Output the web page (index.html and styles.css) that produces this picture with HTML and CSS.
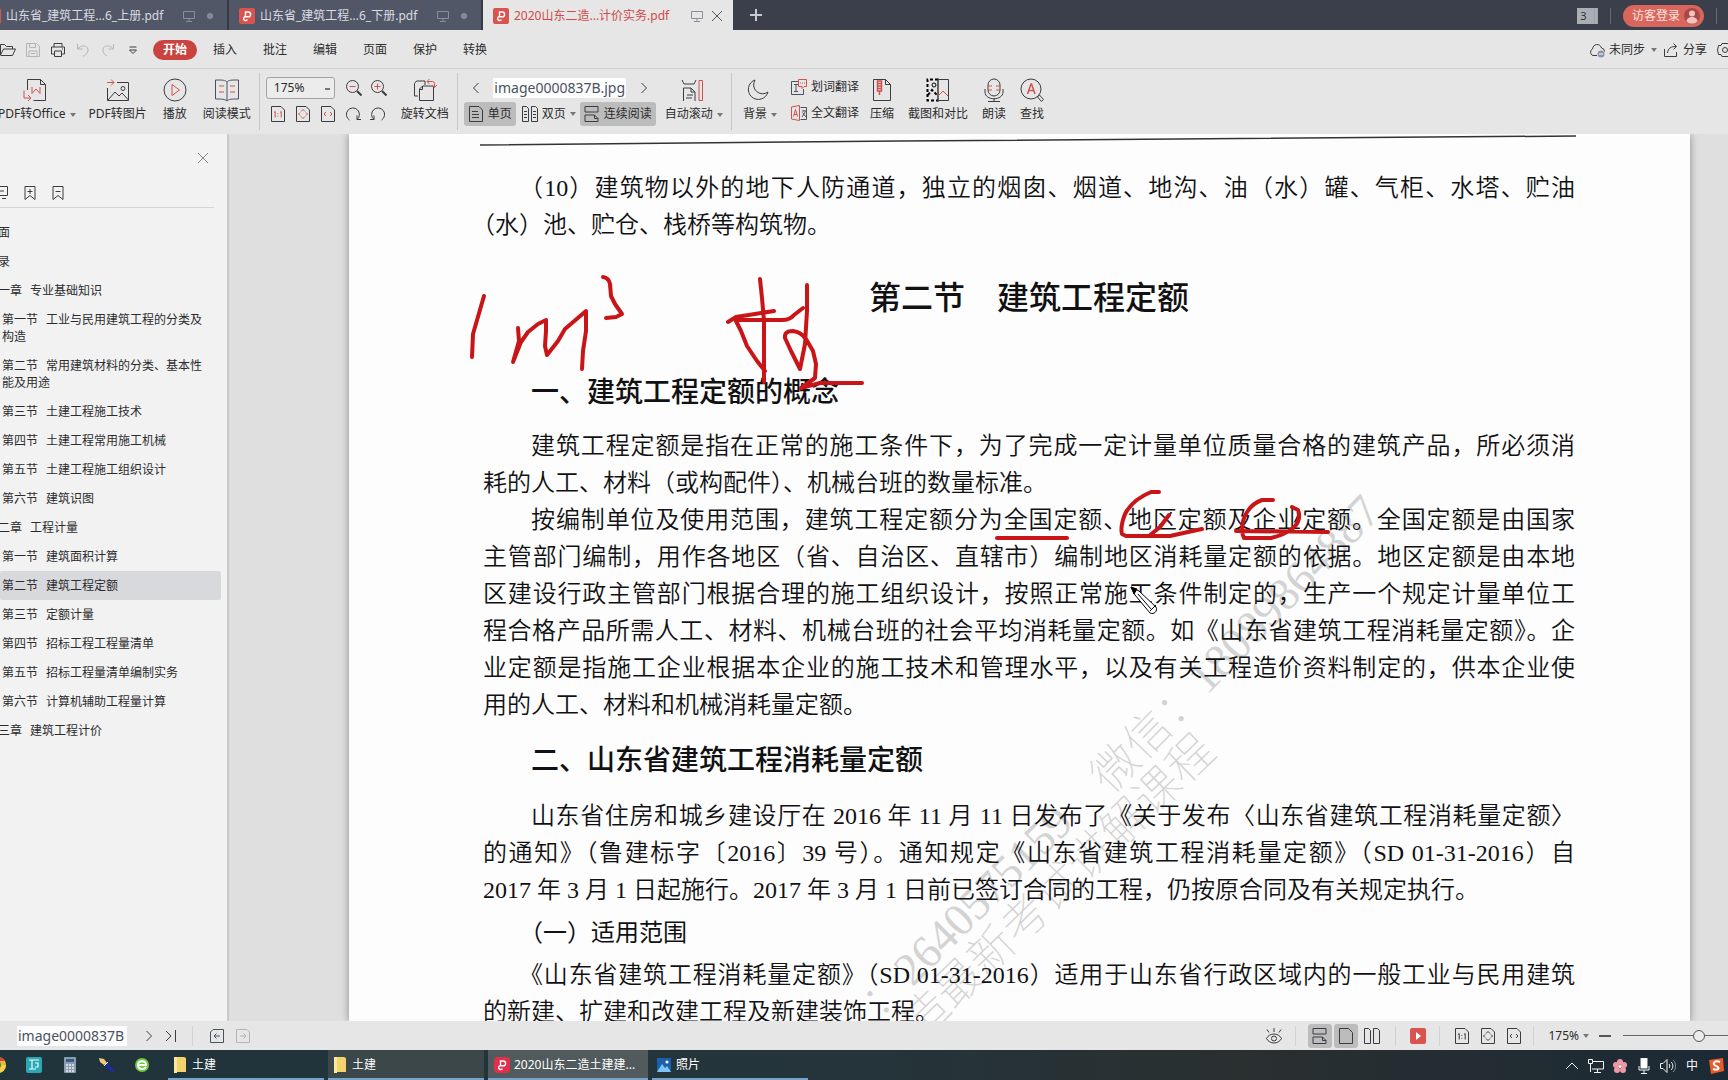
FILE: index.html
```html
<!DOCTYPE html>
<html lang="zh-CN">
<head>
<meta charset="utf-8">
<title>2020山东二造土建计价实务.pdf</title>
<link rel="stylesheet" href="styles.css">
</head>
<body>
<svg class="defs" aria-hidden="true">
  <symbol id="i-pdf" viewBox="0 0 16 16"><rect width="16" height="16" rx="2" fill="#d9534f"/><path d="M6.500 8.500V4h2.700a2.400 2.400 0 0 1 0 4.800H6.500a1.900 1.900 0 1 0 1.800 2.600" fill="none" stroke="#fff" stroke-width="1.400"/></symbol>
  <symbol id="i-monitor" viewBox="0 0 12 12"><path d="M.5 1.500h11v7H.5zM6 8.500v3M3 11.500h6"/></symbol>
  <symbol id="i-x" viewBox="0 0 12 12"><path d="M1 1l10 10M11 1L1 11"/></symbol>
  <symbol id="i-left" viewBox="0 0 8 12"><path d="M6.500 1l-5 5 5 5"/></symbol>
  <symbol id="i-right" viewBox="0 0 8 12"><path d="M1.500 1l5 5-5 5"/></symbol>
  <symbol id="i-oneone" viewBox="0 0 14 16"><path d="M.5.5h9.500l3.500 3.500v11.500H.5z"/><path class="hot" d="M3 6.500l1.200-1v6M9 6.500l1.200-1v6M6.800 7v.8M6.800 9.800v.8"/></symbol>
  <symbol id="i-fitpage" viewBox="0 0 14 16"><path d="M.5.5h9.500l3.500 3.500v11.500H.5z"/><path class="hot" d="M5 5.500l2-2 2 2M5 10.500l2 2 2-2M4 6.500L2.500 8 4 9.500M10 6.500L11.500 8 10 9.500"/></symbol>
  <symbol id="i-fitwidth" viewBox="0 0 14 16"><path d="M.5.5h9.500l3.500 3.500v11.500H.5z"/><path class="hot" d="M5 6L3 8l2 2M9 6l2 2-2 2"/></symbol>
  <symbol id="i-rows" viewBox="0 0 15 16"><path d="M.5.500h13v5.500H.5zM.5 15.500V9h9.500l3.500 3.500v3zM10 9v3.500h3.500"/></symbol>
  <symbol id="i-double" viewBox="0 0 16 16"><path d="M.5.5h4l2 2v13h-6zM9.500.5h4l2 2v13h-6z"/></symbol>
  <symbol id="i-folder" viewBox="0 0 14 16"><path d="M1 0h10l2 1v14H1z" fill="#f5d36c"/><path d="M1 0h3v16H1z" fill="#ffe9a0"/></symbol>
</svg>

<header class="tabs">
  <div class="tab tab-first"><svg class="s16"><use href="#i-pdf"/></svg><span class="tab-name">山东省_建筑工程...6_上册.pdf</span><svg class="s12 line"><use href="#i-monitor"/></svg><i class="dot"></i></div>
  <div class="tab"><svg class="s16"><use href="#i-pdf"/></svg><span class="tab-name">山东省_建筑工程...6_下册.pdf</span><svg class="s12 line"><use href="#i-monitor"/></svg><i class="dot"></i></div>
  <div class="tab tab-active"><svg class="s16"><use href="#i-pdf"/></svg><span class="tab-name">2020山东二造...计价实务.pdf</span><svg class="s12 line"><use href="#i-monitor"/></svg><button class="tab-x" aria-label="关闭标签"><svg class="s12 line"><use href="#i-x"/></svg></button></div>
  <button class="new-tab" aria-label="新建标签"><svg class="s12 line" viewBox="0 0 12 12"><path d="M6 0v12M0 6h12"/></svg></button>
  <div class="account"><span class="count">3</span><i class="bar"></i>
    <button class="login">访客登录<svg class="s16" viewBox="0 0 16 16"><circle cx="8" cy="8" r="8" fill="#a8484a"/><circle cx="8" cy="5.500" r="3" fill="#f2c4bd"/><path d="M2.500 13.500c0-6 11-6 11 0A8 8 0 0 1 2.500 13.500z" fill="#f2c4bd"/></svg></button><i class="bar"></i></div>
</header>

<nav class="menu">
  <div class="quick">
    <button aria-label="打开"><svg class="s16 line" viewBox="0 0 16 16"><path d="M.5 13V2.500h4l2 2h6V7M.5 13L3.500 7h12l-3 6.500H.5"/></svg></button>
    <button aria-label="保存"><svg class="s16 line faint" viewBox="0 0 16 16"><path d="M1.500 1.500h10l3 3v10h-13zM4.500 1.500v4h6v-4M4 14.500V9h8v5.500M6 11.500h4"/></svg></button>
    <button aria-label="打印"><svg class="s16 line" viewBox="0 0 16 16"><path d="M4 5V1.500h8V5M4 12H1.500V5h13v7H12M4.500 9h7v5.500h-7zM12 7h1"/></svg></button>
    <button aria-label="撤销"><svg class="s16 line faint" viewBox="0 0 16 16"><path d="M2.500 2v5h5M2.500 7C7 1.500 14 4 13 9c-.5 2.500-2.500 4-5 5.500"/></svg></button>
    <button aria-label="重做"><svg class="s16 line faint" viewBox="0 0 16 16"><path d="M13.500 2v5h-5M13.500 7C9 1.500 2 4 3 9c.5 2.500 2 4 4 5"/></svg></button>
    <button aria-label="更多"><svg class="s16 line" viewBox="0 0 16 16"><path d="M4.500 5h7M4.500 8L8 11.500 11.500 8z"/></svg></button>
  </div>
  <button class="menu-tab menu-on">开始</button><button class="menu-tab">插入</button><button class="menu-tab">批注</button><button class="menu-tab">编辑</button><button class="menu-tab">页面</button><button class="menu-tab">保护</button><button class="menu-tab">转换</button>
  <div class="menu-right">
    <button class="sync"><svg class="s16 line" viewBox="0 0 16 16"><path d="M8 13.500H4a3.500 3.500 0 0 1-.5-6.500C4 1.500 11 1 12.500 6a3.500 3.500 0 0 1 3 3.500"/><circle cx="12" cy="12" r="3.500" fill="#8b94a8" stroke="none"/><path d="M10 12h4" stroke="#fff"/></svg>未同步<i class="caret"></i></button>
    <button class="share"><svg class="s16 line" viewBox="0 0 16 16"><path d="M1.500 7v7.500h12V10M4.500 11C5 6 8 4.500 13 4.500M10.500 1.500l3 3-3 3"/></svg>分享</button>
    <button class="gear" aria-label="设置"><svg class="s16 line" viewBox="0 0 16 16"><path d="M5 1.500h6l1 2h2.500l1 4.500-1 4.500H12l-1 2H5l-1-2H1.500L.5 8l1-4.500H4z"/><circle cx="8" cy="8" r="2.500"/></svg></button>
  </div>
</nav>

<section class="ribbon" aria-label="开始">
  <button class="tool tool-first"><svg class="s24 line" viewBox="0 0 24 24"><path d="M4.500 12V1.500h13l5 5v16h-12M17.500 1.500v5h5"/><path class="red" d="M9 9v6.500l4-4.500 4 4.500V9M1 12.500V20h7M5 17l3 3-3 3"/></svg><span>PDF转Office<i class="caret"></i></span></button>
  <button class="tool"><svg class="s24 line" viewBox="0 0 24 24"><path d="M11 4.500h11.500v18h-21V10M2 22l7-8 4 4 3-3 6.500 7"/><circle cx="17" cy="10.500" r="2"/><path class="red" d="M1 4.500h7M5 1.500l3 3-3 3"/></svg><span>PDF转图片</span></button>
  <button class="tool"><svg class="s24 line" viewBox="0 0 24 24"><circle cx="12" cy="12" r="11"/><path class="red" d="M9 6.500v11l7.500-5.500z"/></svg><span>播放</span></button>
  <button class="tool"><svg class="s24 line blue" viewBox="0 0 24 24"><path d="M12 4C10 2 8 2 .5 2v19c7 0 9 0 11.500 2 2-2 4-2 11.500-2V2C16 2 14 2 12 4v19"/><path class="red" d="M4 8h5M4 14h5M15 8h5M15 14h5"/></svg><span>阅读模式</span></button>
  <hr>
  <div class="stack">
    <div class="row"><select class="zoom" aria-label="缩放比例"><option>175%</option></select>
      <div class="mags"><button aria-label="缩小"><svg class="s16 line" viewBox="0 0 16 16"><circle cx="6.500" cy="6.500" r="6"/><path d="M11 11l4.500 4.500" stroke-width="2"/><path class="red" d="M3.500 6.500h6"/></svg></button>
      <button aria-label="放大"><svg class="s16 line" viewBox="0 0 16 16"><circle cx="6.500" cy="6.500" r="6"/><path d="M11 11l4.500 4.500" stroke-width="2"/><path class="red" d="M3.500 6.500h6M6.500 3.500v6"/></svg></button></div></div>
    <div class="row fits"><button aria-label="实际大小"><svg class="s16 line"><use href="#i-oneone"/></svg></button><button aria-label="适合页面"><svg class="s16 line"><use href="#i-fitpage"/></svg></button><button aria-label="适合宽度"><svg class="s16 line"><use href="#i-fitwidth"/></svg></button>
      <button aria-label="顺时针旋转"><svg class="s16 line" viewBox="0 0 16 16"><path d="M4.500 14A6.500 6.500 0 1 1 12 13.500M12 9.500v4h4"/></svg></button><button aria-label="逆时针旋转"><svg class="s16 line" viewBox="0 0 16 16"><path d="M11.500 14A6.500 6.500 0 1 0 4 13.500M4 9.500v4H0"/></svg></button></div>
  </div>
  <button class="tool"><svg class="s24 line" viewBox="0 0 24 24"><path d="M5 18H1.500V5.500L3.500 3H12v4M6.500 22.500V11l3-3h11v14.500zM9.500 8v3.500h-3"/><path class="red" d="M14 3.500h5.500a2 2 0 0 1 2 2V9M16.500 1l-2.500 2.500 2.500 2.500M19 7l2.500 2.500L24 7"/></svg><span>旋转文档</span></button>
  <hr>
  <div class="stack layout">
    <div class="row pager"><button aria-label="上一页"><svg class="s12 line"><use href="#i-left"/></svg></button><input class="page-name" aria-label="页码" value="image0000837B.jpg"><button aria-label="下一页"><svg class="s12 line"><use href="#i-right"/></svg></button></div>
    <div class="row modes"><button class="mode mode-on"><svg class="s16 line" viewBox="0 0 16 16"><path d="M1.500.5h9.500l3.500 3.500v11.500h-13zM4 5.500h6M4 8.500h7M4 11.500h7"/></svg>单页</button><button class="mode"><svg class="s16 line" viewBox="0 0 16 16"><path d="M.5.5h4l2 2v13h-6zM9.500.5h4l2 2v13h-6zM2 5.500h3M2 8.500h3M2 11.500h3M11 5.500h3M11 8.500h3M11 11.500h3"/></svg>双页<i class="caret"></i></button><button class="mode mode-on"><svg class="s16 line"><use href="#i-rows"/></svg>连续阅读</button></div>
  </div>
  <button class="tool"><svg class="s24 line" viewBox="0 0 24 24"><path d="M2 2l2 4h10l2-4M3.500 23V10H11l4 4v9M11 10v4h4M7 17h6M6 20h6"/><path class="red" d="M19 2.500h3.500v20H19z"/></svg><span>自动滚动<i class="caret"></i></span></button>
  <hr class="wide">
  <button class="tool"><svg class="s24 line" viewBox="0 0 24 24"><path d="M9 2a10 10 0 1 0 13 12A9 9 0 0 1 9 2z"/></svg><span>背景<i class="caret"></i></span></button>
  <div class="stack words">
    <button class="word"><svg class="s16 line blue" viewBox="0 0 16 16"><path d="M8 2.500H.5v13h12V10M3 5.500h4M5 5.500v7M3 12.500h4"/><path class="red" d="M7.500.5h8v7h-2.500l-2 2v-2H7.500zM9.500 3.500v1M11.500 3.500v1M13.500 3.500v1"/></svg>划词翻译</button>
    <button class="word"><svg class="s16 line blue" viewBox="0 0 16 16"><path d="M9.500 2.500h6v12h-6M11 6h4M13 5v1M14.500 6.500L11 12M11.500 7.500L15 12"/><path class="red" d="M.5 2l8-1.500v15L.5 14zM2.500 11.500l2-7 2 7M3 9.500h3"/></svg>全文翻译</button>
  </div>
  <button class="tool"><svg class="s24 line" viewBox="0 0 24 24"><path d="M3.500 1.500h12l5 5v16h-17zM15.500 1.500v5h5"/><path class="red" d="M7.500 3h4v10h-4zM7.500 5.500h4M7.500 8h4M7.500 10.500h4M9.500 13v4" stroke-width="1.500"/></svg><span>压缩</span></button>
  <button class="tool"><svg class="s24 line" viewBox="0 0 24 24"><path d="M12 1.500H1.500v21H12M2 17l4-5 5 5" stroke-dasharray="3 2" stroke="#000" stroke-width="2"/><path d="M12 1.500h10.500v21H12zM12 0v24"/><circle cx="8" cy="7" r="2" stroke="#000"/><path class="red" d="M12 18l5-5 5 5"/></svg><span>截图和对比</span></button>
  <button class="tool"><svg class="s24 line" viewBox="0 0 24 24"><rect x="6" y="1" width="12" height="17" rx="6"/><path d="M3 11v3c0 9 18 9 18 0v-3M12 20.500V23.500M6 23.500h12"/><path class="red" d="M6 8h4M6 12h4M14 8h4M14 12h4"/></svg><span>朗读</span></button>
  <button class="tool"><svg class="s24 line" viewBox="0 0 24 24"><circle cx="11" cy="11" r="10"/><path d="M17.500 19l2-2 4 4.500-2 2z"/><path class="red" d="M7.500 16l3.500-10h.5l3.500 10M8.500 12.500h5.500" stroke-width="1.500"/></svg><span>查找</span></button>
</section>

<main class="work">
  <aside class="side">
    <button class="side-x" aria-label="关闭目录"><svg class="s12 line"><use href="#i-x"/></svg></button>
    <div class="side-tools">
      <button aria-label="折叠"><svg class="s16 line" viewBox="0 0 16 16"><path d="M1.500 1.500h12v9h-12zM5 6h5M4 13.500h2M8 13.500h4"/></svg></button>
      <button aria-label="添加书签"><svg class="s16 line" viewBox="0 0 16 16"><path d="M3 1.500h10v13l-5-4-5 4zM5.500 6.500h5M8 4v5"/></svg></button>
      <button aria-label="删除书签"><svg class="s16 line" viewBox="0 0 16 16"><path d="M3 1.500h10v13l-5-4-5 4zM5.500 6.500h5"/></svg></button>
    </div>
    <nav class="toc" aria-label="目录">
      <a href="#">封面</a>
      <a href="#">目录</a>
      <a href="#"><b>第一章</b>专业基础知识</a>
      <a class="sub" href="#"><b>第一节</b>工业与民用建筑工程的分类及构造</a>
      <a class="sub" href="#"><b>第二节</b>常用建筑材料的分类、基本性能及用途</a>
      <a class="sub" href="#"><b>第三节</b>土建工程施工技术</a>
      <a class="sub" href="#"><b>第四节</b>土建工程常用施工机械</a>
      <a class="sub" href="#"><b>第五节</b>土建工程施工组织设计</a>
      <a class="sub" href="#"><b>第六节</b>建筑识图</a>
      <a href="#"><b>第二章</b>工程计量</a>
      <a class="sub" href="#"><b>第一节</b>建筑面积计算</a>
      <a class="sub current" href="#" aria-current="true"><b>第二节</b>建筑工程定额</a>
      <a class="sub" href="#"><b>第三节</b>定额计量</a>
      <a class="sub" href="#"><b>第四节</b>招标工程工程量清单</a>
      <a class="sub" href="#"><b>第五节</b>招标工程量清单编制实务</a>
      <a class="sub" href="#"><b>第六节</b>计算机辅助工程量计算</a>
      <a href="#"><b>第三章</b>建筑工程计价</a>
    </nav>
  </aside>
  <div class="viewer">
    <article class="page">
      <svg class="overlay" width="1341" height="887" viewBox="349 134 1341 887" aria-hidden="true">
        <path d="M480 145L900 141 1576 136" fill="none" stroke="#333" stroke-width="1.500"/>
        <g class="mark">
          <text transform="translate(1111 795) rotate(-46)">微信：18089864887</text>
          <text transform="translate(880 1020) rotate(-45)">：2640575159</text>
          <text transform="translate(920 1042) rotate(-44)">造最新考试讲解课程</text>
        </g>
      </svg>
      <p><span class="ln in full">（10）建筑物以外的地下人防通道，独立的烟囱、烟道、地沟、油（水）罐、气柜、水塔、贮油</span><span class="ln">（水）池、贮仓、栈桥等构筑物。</span></p>
      <h1>第二节　建筑工程定额</h1>
      <h2>一、建筑工程定额的概念</h2>
      <p><span class="ln in full">建筑工程定额是指在正常的施工条件下，为了完成一定计量单位质量合格的建筑产品，所必须消</span><span class="ln">耗的人工、材料（或构配件）、机械台班的数量标准。</span></p>
      <p><span class="ln in full">按编制单位及使用范围，建筑工程定额分为全国定额、地区定额及企业定额。全国定额是由国家</span><span class="ln full">主管部门编制，用作各地区（省、自治区、直辖市）编制地区消耗量定额的依据。地区定额是由本地</span><span class="ln full">区建设行政主管部门根据合理的施工组织设计，按照正常施工条件制定的，生产一个规定计量单位工</span><span class="ln full">程合格产品所需人工、材料、机械台班的社会平均消耗量定额。如《山东省建筑工程消耗量定额》。企</span><span class="ln full">业定额是指施工企业根据本企业的施工技术和管理水平，以及有关工程造价资料制定的，供本企业使</span><span class="ln">用的人工、材料和机械消耗量定额。</span></p>
      <h2 class="second">二、山东省建筑工程消耗量定额</h2>
      <p><span class="ln in full">山东省住房和城乡建设厅在 2016 年 11 月 11 日发布了《关于发布〈山东省建筑工程消耗量定额〉</span><span class="ln full">的通知》（鲁建标字〔2016〕39 号）。通知规定《山东省建筑工程消耗量定额》（SD 01-31-2016）自</span><span class="ln">2017 年 3 月 1 日起施行。2017 年 3 月 1 日前已签订合同的工程，仍按原合同及有关规定执行。</span></p>
      <h3>（一）适用范围</h3>
      <p><span class="ln in full">《山东省建筑工程消耗量定额》（SD 01-31-2016）适用于山东省行政区域内的一般工业与民用建筑</span><span class="ln">的新建、扩建和改建工程及新建装饰工程。</span></p>
      <svg class="overlay" width="1341" height="887" viewBox="349 134 1341 887" aria-hidden="true">
        <g class="ink">
          <path d="M484 296L473 334 472 357"/>
          <path d="M518 328L519 341 513 362 521 342 528 332 538 324 546 320 546 331 545 346 547 355 558 341 565 329 586 311 586 331 583 351 582 369"/>
          <path d="M603 277Q609 278 610 284L611 296 615 304 622 314 616 317 606 318"/>
          <path d="M760 279L762 298 764 321 764 382M728 322L736 317 755 314 774 311M736 321L741 331 747 346 757 361 765 371M738 320H782Q790 320 794 315L803 308"/>
          <path d="M807 285V311L805 344 800 369 791 351 785 338Q784 331 793 331 801 332 806 339L813 351 816 364 815 378 801 388 820 383H862"/>
          <path d="M997 538H1067M1159 492H1151Q1132 500 1125 514 1120 527 1122 534L1126 536H1170L1188 532 1202 529M1169 515L1160 527 1149 536"/>
          <path d="M1273 500H1262Q1248 505 1243 521 1241 533 1244 538H1271Q1284 535 1292 529 1302 521 1298 510L1292 507M1236 531L1328 532"/>
        </g>
        <g stroke="#000" fill="#fff"><path d="M1131 587l8 4 17 16c2 4-2 8-6 6l-15-18z"/><path d="M1131 587l6 2-3 5z" fill="#000"/><path d="M1138 594l13 15M1150 611l6-6" fill="none"/></g>
      </svg>
    </article>
  </div>
</main>

<footer class="status">
  <input class="page-name page-name-low" aria-label="当前页" value="image0000837B">
  <button aria-label="下一页"><svg class="s12 line"><use href="#i-right"/></svg></button>
  <button aria-label="末页"><svg class="s12 line" viewBox="0 0 12 12"><path d="M1 1l5 5-5 5M10.500 0v12"/></svg></button>
  <hr>
  <button aria-label="后退"><svg class="s16 line blue" viewBox="0 0 16 16"><path d="M4 1.500h10.500v13h-13V4zM5 8h6M7.500 5.500L5 8l2.500 2.500"/></svg></button>
  <button aria-label="前进"><svg class="s16 line faint" viewBox="0 0 16 16"><path d="M1.500 1.500H12L14.500 4v10.500h-13zM5 8h6M8.500 5.500L11 8l-2.500 2.500"/></svg></button>
  <div class="status-right">
    <button aria-label="护眼"><svg class="s16 line" viewBox="0 0 16 16"><path d="M.5 10.500c3-6 12-6 15 0-3 6-12 6-15 0zM8 4V0M3 4.500L1 1.500M13 4.500l2-3"/><circle cx="8" cy="10.500" r="2.500"/></svg></button><hr>
    <div class="views"><button class="on" aria-label="连续"><svg class="s16 line"><use href="#i-rows"/></svg></button><button class="on" aria-label="单页"><svg class="s16 line" viewBox="0 0 16 16"><path d="M1.500.5h9l4 4v11h-13z"/></svg></button><button aria-label="双页"><svg class="s16 line"><use href="#i-double"/></svg></button></div><hr>
    <button aria-label="播放"><svg class="s16" viewBox="0 0 16 16"><rect width="16" height="16" rx="2" fill="#d9534f"/><path d="M6 4l5 4-5 4z" fill="#fff"/></svg></button><hr>
    <div class="fit-low"><button aria-label="实际大小"><svg class="s16 line mono"><use href="#i-oneone"/></svg></button><button aria-label="适合页面"><svg class="s16 line mono"><use href="#i-fitpage"/></svg></button><button aria-label="适合宽度"><svg class="s16 line mono"><use href="#i-fitwidth"/></svg></button></div><hr>
    <button class="pct">175%<i class="caret"></i></button>
    <button class="minus" aria-label="缩小"></button>
    <input class="slider" type="range" min="0" max="100" value="50" aria-label="缩放">
  </div>
</footer>

<footer class="taskbar">
  <div class="pins">
    <button aria-label="浏览器"><svg class="s16" viewBox="0 0 16 16"><circle cx="8" cy="8" r="8" fill="#e8b93a"/><path d="M8 0a8 8 0 0 1 7 4H8z" fill="#d8452f"/><path d="M16 8a8 8 0 0 1-8 8l4-8z" fill="#f6d24a"/><circle cx="8" cy="8" r="3" fill="#3f8f4b"/></svg></button>
    <button aria-label="广联达"><svg class="s16" viewBox="0 0 16 16"><rect width="16" height="16" rx="2" fill="#2ba8b4"/><path d="M3 3h10M6 3v9M3 12h7M9 6h3v4H9" stroke="#e8ffff" fill="none" stroke-width="1.200"/></svg></button>
    <button aria-label="计算器"><svg class="s16" viewBox="0 0 16 16"><rect x="2" width="12" height="16" rx="1" fill="#8d9db0"/><path d="M4 2h8v3H4z" fill="#3c5c86"/><path d="M4 8h8M4 11h8M4 14h8" stroke="#e8eef6" stroke-width="1.500" stroke-dasharray="2 1"/></svg></button>
    <button aria-label="画笔"><svg class="s16" viewBox="0 0 16 16"><path d="M1 1l5 1 3 4-3 2-4-3z" fill="#f3c878"/><path d="M8 7l7 8" stroke="#1c2cae" stroke-width="3"/><path d="M6 9l4-4" stroke="#fff"/></svg></button>
    <button aria-label="360浏览器"><svg class="s16" viewBox="0 0 16 16"><circle cx="8" cy="8" r="7" fill="#6ccb3f"/><path d="M4 8h8c0-5-8-5-8 0s6 5 8 2" fill="none" stroke="#fff" stroke-width="2"/></svg></button>
  </div>
  <button class="task"><svg class="s16"><use href="#i-folder"/></svg><span>土建</span></button>
  <button class="task task-lit"><svg class="s16"><use href="#i-folder"/></svg><span>土建</span></button>
  <button class="task task-on"><svg class="s16" viewBox="0 0 16 16"><rect width="16" height="16" rx="4" fill="#e22f4c"/><path d="M6.500 8.500V4h2.700a2.400 2.400 0 0 1 0 4.800H6.500a1.900 1.900 0 1 0 1.800 2.600" fill="none" stroke="#fff" stroke-width="1.400"/></svg><span>2020山东二造土建建...</span></button>
  <button class="task"><svg class="s16" viewBox="0 0 16 16"><path d="M1 1h14v14H1z" fill="#1d5fae"/><path d="M1 15l5-8 3 4 2-2 4 6z" fill="#7cc4f2"/><circle cx="11" cy="5" r="1.500" fill="#fff"/></svg><span>照片</span></button>
  <div class="tray">
    <button aria-label="显示隐藏的图标"><svg class="s16 line" viewBox="0 0 16 16"><path d="M2 11l6-6 6 6"/></svg></button>
    <svg class="s16 line" viewBox="0 0 16 16"><path d="M5 3.500h10.500v7.500H4M9.500 11v3M6 14.500h7M.5 1.500h4v4h-4zM2.500 5.500V14"/></svg>
    <svg class="s16" viewBox="0 0 16 16" fill="#ee9aa6"><circle cx="8" cy="4" r="3"/><circle cx="4" cy="7" r="3"/><circle cx="12" cy="7" r="3"/><circle cx="5" cy="12" r="3"/><circle cx="11" cy="12" r="3"/><circle cx="8" cy="8.500" r="1.500" fill="#fff"/></svg>
    <svg class="s16 line" viewBox="0 0 16 16"><rect x="5" y="0" width="6" height="10" fill="#fff"/><path d="M3 8v4h10V8M8 12v3.500M5 15.500h6"/></svg>
    <svg class="s16 line" viewBox="0 0 16 16"><path d="M.5 5.500H3l4-4v13l-4-4H.5zM9 6c1 1 1 3 0 4M11 4c2.500 2 2.500 6 0 8"/><path d="M13 2c3.500 3 3.500 9 0 12" opacity=".5"/></svg>
    <span class="ime">中</span>
    <svg class="s16" viewBox="0 0 16 16"><path d="M1 2l14-2 1 13-13 3z" fill="#ec5a2b"/><path d="M12 4C7 2 3 6 8 8s2 5-3 3" fill="none" stroke="#fff" stroke-width="2"/></svg>
  </div>
</footer>
</body>
</html>
```
FILE: styles.css
```css
* { box-sizing: border-box; }
body {
  margin: 0;
  height: 100vh;
  display: flex;
  flex-direction: column;
  overflow: hidden;
  background: #e6e6e6;
  color: #2c2c2e;
  font: 12px/16px "Noto Sans", "Noto Sans CJK SC", sans-serif;
}
button, input, select { font: inherit; color: inherit; }
button {
  border: 0;
  padding: 0;
  background: none;
  display: flex;
  align-items: center;
  white-space: nowrap;
  flex: none;
}
a { color: inherit; text-decoration: none; }
svg { display: block; flex: none; }
.defs { position: absolute; width: 0; height: 0; }
.s12 { width: 12px; height: 12px; }
.s16 { width: 16px; height: 16px; }
.s24 { width: 24px; height: 24px; }
.line { fill: none; stroke: #3c3c40; stroke-width: 1; }
.blue { stroke: #4a5262; }
.faint { stroke: #b4b4b6; }
.red { stroke: #d0524f; }
.mono { --hot: #3c3c40; }
.hot { stroke: var(--hot, #d0524f); }
.caret {
  display: inline-block;
  margin-left: 4px;
  border: 3px solid transparent;
  border-top: 4px solid #77777a;
  border-bottom: 0;
  vertical-align: middle;
}

/* window tabs */
.tabs { display: flex; height: 30px; flex: none; background: #3b3e4b; color: #d9dbe2; }
.tab {
  display: flex;
  align-items: center;
  width: 254px;
  padding: 2px 10px 0;
  background: #525767;
  border-right: 2px solid #373946;
}
.tab-first { margin-left: -25px; }
.tab .line { stroke: #8a8e9b; }
.tab-name { width: 182px; padding-left: 5px; white-space: nowrap; }
.dot { width: 6px; height: 6px; margin-left: 12px; border-radius: 50%; background: #868a98; }
.tab-active { width: 250px; border: 0; background: #e6e6e6; color: #cf4a48; }
.tab-x { margin-left: 8px; }
.tab-active .tab-x .line { stroke: #55555a; }
.new-tab { margin-left: 17px; }
.new-tab .line { stroke: #c8cad2; stroke-width: 2; }
.account { display: flex; align-items: center; gap: 12px; margin-left: auto; padding: 2px 11px 0 0; }
.count {
  width: 21px;
  padding-right: 4px;
  border-right: 4px double #9ea3aa;
  background: #a9afb5;
  color: #333;
  font-size: 11px;
  text-align: center;
}
.bar { width: 1px; height: 16px; background: #666a76; }
.login {
  gap: 4px;
  height: 22px;
  padding: 0 4px 0 9px;
  border-radius: 11px;
  background: #d9665c;
  color: #fbe3df;
}

/* menu row */
.menu {
  display: flex;
  align-items: center;
  flex: none;
  height: 39px;
  padding-top: 1px;
  border-bottom: 1px solid #cfcfcf;
}
.quick { display: flex; gap: 9px; margin-right: 12px; }
.menu-tab { height: 20px; padding: 0 10px; border-radius: 10px; margin-right: 6px; }
.menu-on { background: #c94441; color: #fff; font-weight: 700; }
.menu-right { display: flex; gap: 10px; margin: 0 -5px 0 auto; }
.menu-right button { gap: 4px; }
.menu-right .sync { margin-right: -4px; }
.menu-right .caret { margin-left: 2px; }

/* ribbon */
.ribbon { display: flex; align-items: stretch; flex: none; height: 65px; overflow: hidden; }
.ribbon hr { margin: 4px 0; border: 0; border-left: 1px solid #c6c6c6; }
.ribbon .wide { margin: 4px 3px; }
.tool { flex-direction: column; padding: 9px 8px 0; gap: 4px; }
.tool-first { margin-left: -10px; }
.tool .caret { margin-right: -3px; }
.stack { display: flex; flex-direction: column; gap: 3px; padding: 7px 6px 0; }
.row { display: flex; align-items: center; height: 23px; }
.zoom {
  appearance: none;
  width: 69px;
  height: 22px;
  margin-right: 11px;
  padding: 0 7px;
  border: 1px solid #a2a2a6;
  border-radius: 3px;
  background: linear-gradient(#77777a, #77777a) 58px 10px / 5px 2px no-repeat #ececec;
}
.mags { display: flex; gap: 9px; }
.fits { gap: 9px; padding-left: 4px; }
.layout { padding-right: 1px; }
.pager { justify-content: space-between; padding: 0 6px; }
.page-name {
  width: 133px;
  height: 20px;
  padding: 0 1px;
  border: 0;
  background: #fdfdfd;
  color: #4a5260;
  font-size: 14px;
}
.modes { gap: 2px; }
.mode { gap: 4px; height: 24px; padding: 0 4px; border-radius: 3px; }
.mode-on { background: #bcbcbc; }
.mode .caret { margin: 0 -2px 0 0; }
.words { gap: 10px; padding: 10px 4px 0 9px; }
.word { gap: 4px; }
.words ~ .tool { padding: 9px 7px 0; }

/* outline panel */
.work { display: flex; flex: 1; min-height: 0; }
.side {
  width: 229px;
  flex: none;
  border-right: 2px solid #c9c9c9;
  background: #f2f2f2;
  overflow: hidden;
}
.side-x { margin: 18px 18px 0 auto; }
.side-x .line { stroke: #88888c; }
.side-tools {
  display: flex;
  gap: 12px;
  margin: 21px 13px 10px 0;
  padding: 0 0 6px;
  border-bottom: 1px solid #d6d6d6;
}
.side-tools button:first-child { margin-left: -6px; }
.toc a { display: block; margin-right: 6px; padding: 6px 8px 6px 0; line-height: 17px; }
.toc a:not(.sub) { margin-left: -14px; }
.toc .sub { padding-left: 2px; }
.toc b { margin-right: 8px; font-weight: 400; }
.toc .current { background: #d8d9dd; border-radius: 2px; }

/* document */
.viewer { flex: 1; display: flex; padding: 0 38px 0 120px; background: #dfdfdf; overflow: hidden; }
.page {
  position: relative;
  flex: 1;
  min-height: 887px;
  padding: 36px 115px 0 134px;
  background: #fdfdfd;
  box-shadow: 0 0 8px #8a8a8a;
  color: #111113;
  font: 24px/37px "Liberation Serif", "Noto Sans CJK SC", sans-serif;
  text-spacing-trim: trim-start;
}
.page p { position: relative; margin: 0; font-weight: 350; }
.ln { display: block; white-space: nowrap; }
.in { padding-left: 48px; }
.full { text-align-last: justify; }
.page h1 { position: relative; margin: 30px 0 51px; font-size: 32px; line-height: 48px; font-weight: 500; text-align: center; }
.page h2 { position: relative; margin: 0 0 15px; padding-left: 48px; font-size: 28px; line-height: 40px; font-weight: 500; }
.page .second { margin: 17px 0; }
.page h3 { position: relative; margin: 6px 0 5px; padding-left: 48px; font-size: 24px; line-height: 37px; font-weight: 400; }
.overlay { position: absolute; left: 0; top: 0; pointer-events: none; }
.ink { fill: none; stroke: #c91418; stroke-width: 4; stroke-linecap: round; stroke-linejoin: round; }
.mark { fill: #d3d3d3; font-size: 46px; font-weight: 100; }

/* status bar */
.status { display: flex; align-items: center; flex: none; height: 29px; padding-left: 17px; background: #e6e6e6; }
.status hr { width: 1px; height: 20px; margin: 0 15px; border: 0; background: #d2d2d2; }
.page-name-low { width: 110px; margin-right: 16px; }
.status > button + button { margin-left: 10px; }
.status > hr + button { margin-left: 1px; }
.status-right { display: flex; align-items: center; margin-left: auto; }
.status-right hr { margin: 0 14px 0 13px; }
.views { display: flex; gap: 2px; margin: 0 -2px; }
.views button { width: 24px; height: 24px; justify-content: center; border-radius: 3px; }
.views .on { background: #bcbcbc; }
.fit-low { display: flex; gap: 10px; margin-right: -2px; }
.minus { width: 12px; height: 2px; margin: 0 12px 0 10px; background: #55555a; }
.slider { appearance: none; width: 152px; height: 14px; margin: 0 -47px 0 0; background: linear-gradient(#66666a, #66666a) 0 6px / 100% 1px no-repeat; }
.slider::-webkit-slider-thumb { appearance: none; width: 12px; height: 12px; border: 1px solid #55555a; border-radius: 50%; background: #ececec; }

/* taskbar */
.taskbar {
  display: flex;
  flex: none;
  height: 30px;
  background: linear-gradient(90deg, #20343c, #24343a 50%, #2a2f30 72%, #1b2a35);
  color: #fff;
}
.pins { display: flex; gap: 20px; align-items: center; margin-left: -10px; padding-right: 18px; }
.task { width: 156px; gap: 4px; margin-right: 4px; padding: 2px 4px 0; border-bottom: 2px solid #76a3c9; }
.task-lit { background: #3b4749; }
.task-on { width: 160px; padding: 2px 6px 0; background: #515a5c; }
.tray { display: flex; gap: 8px; align-items: center; margin-left: auto; padding: 2px 4px 0 0; }
.tray .line { stroke: #f2f4f5; }
.ime { padding: 0 2px; }
```
